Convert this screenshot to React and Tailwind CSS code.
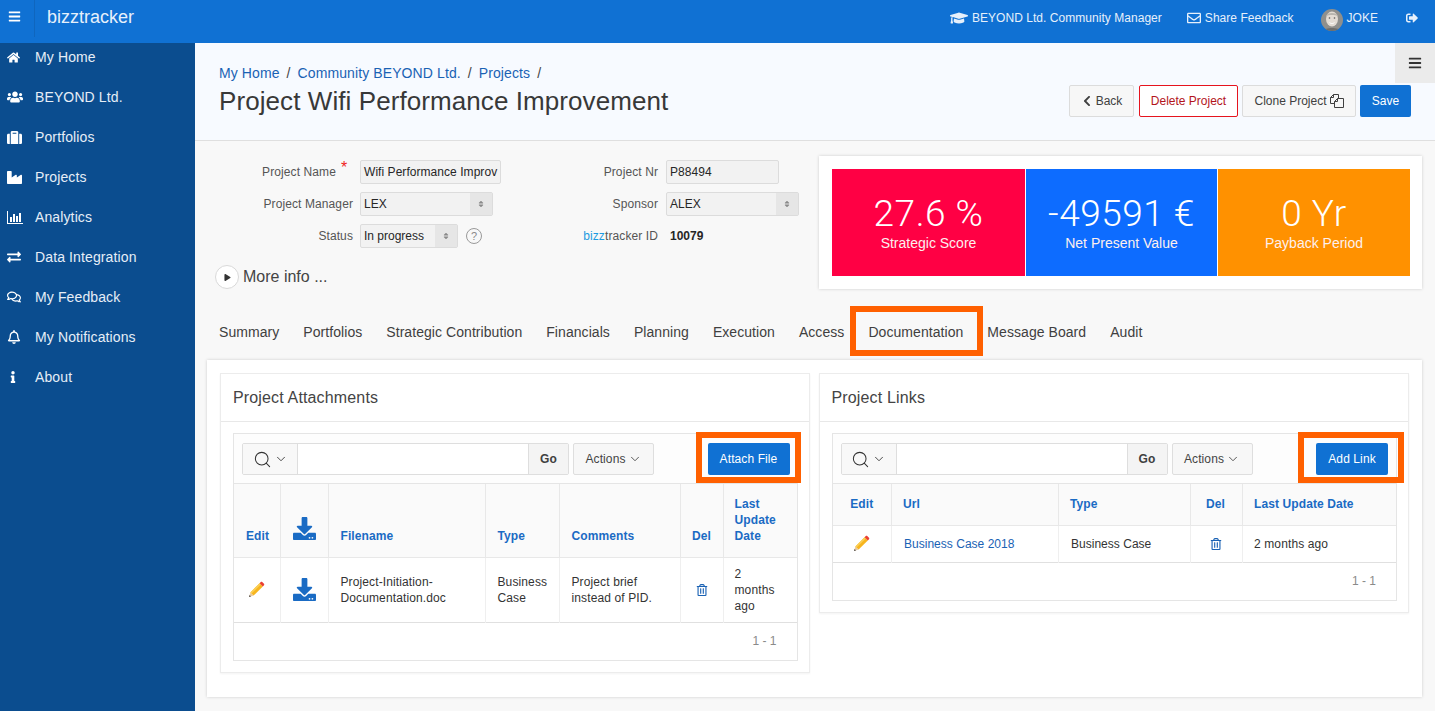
import React from "react";
import {
  FaBars,
  FaHome,
  FaUsers,
  FaSuitcase,
  FaIndustry,
  FaExchangeAlt,
  FaRegComments,
  FaRegBell,
  FaInfo,
  FaGraduationCap,
  FaRegEnvelope,
  FaSignOutAlt,
  FaChevronLeft,
  FaDownload,
  FaRegTrashAlt,
  FaPlay,
  FaSort,
} from "react-icons/fa";
import { Search, ChevronDown } from "lucide-react";

const font = { fontFamily: '"Liberation Sans", Arial, sans-serif' };

function ChartIcon() {
  return (
    <svg width="16" height="13" viewBox="0 0 16 13" fill="currentColor">
      <path d="M0 0h1v12h15v1H0z" />
      <rect x="3" y="6" width="2" height="5" />
      <rect x="6" y="3" width="2" height="8" />
      <rect x="9" y="5" width="2" height="6" />
      <rect x="12" y="2" width="2" height="9" />
    </svg>
  );
}

function CloneIcon() {
  return (
    <svg width="14" height="14" viewBox="0 0 14 14" fill="none" stroke="currentColor" strokeWidth="1">
      <path d="M8.500 4.500V.5H3.500L.5 3.500v6h4" />
      <path d="M.5 3.500h3v-3" />
      <path d="M4.500 13.500v-6l3-3h6v9z" fill="#f7f7f7" />
      <path d="M4.500 7.500h3v-3" />
    </svg>
  );
}

function Pencil() {
  return (
    <svg width="17" height="17" viewBox="0 0 17 17">
      <path d="M1 16l1.400-4.600 3.200 3.200z" fill="#e8c9a0" />
      <path d="M1 16l.6-2 1.400 1.400z" fill="#444" />
      <path d="M2.400 11.400L11.600 2.200l3.200 3.200-9.200 9.200z" fill="#f7b51e" />
      <path d="M2.400 11.400L11.600 2.200l1.200 1.200-9.200 9.200z" fill="#fbcf55" />
      <path d="M11.600 2.200l1.200-1.200c.4-.4 1-.4 1.400 0l1.800 1.800c.4.4.4 1 0 1.400l-1.200 1.200z" fill="#ea3f33" />
    </svg>
  );
}

function Avatar() {
  return (
    <svg width="22" height="22" viewBox="0 0 22 22" className="rounded-full">
      <rect width="22" height="22" fill="#8f8f8c" />
      <ellipse cx="11" cy="10" rx="6" ry="7.500" fill="#e3dcd4" />
      <path d="M5 7c1-4 11-4 12 0-3-1.500-9-1.500-12 0z" fill="#b9b5ae" />
      <path d="M8 13c2 1.500 4 1.500 6 0-1 2.500-5 2.500-6 0z" fill="#fff" />
      <circle cx="8.500" cy="9" r=".8" fill="#555" />
      <circle cx="13.500" cy="9" r=".8" fill="#555" />
      <path d="M2 22c2-4 16-4 18 0z" fill="#6e6e6c" />
    </svg>
  );
}

const navItems = [
  ["My Home", <FaHome size={13} />],
  ["BEYOND Ltd.", <FaUsers size={16} />],
  ["Portfolios", <FaSuitcase size={15} />],
  ["Projects", <FaIndustry size={15} />],
  ["Analytics", <ChartIcon />],
  ["Data Integration", <FaExchangeAlt size={14} />],
  ["My Feedback", <FaRegComments size={14} />],
  ["My Notifications", <FaRegBell size={14} />],
  ["About", <FaInfo size={12} />],
];

const tabs = [
  "Summary",
  "Portfolios",
  "Strategic Contribution",
  "Financials",
  "Planning",
  "Execution",
  "Access",
  "Documentation",
  "Message Board",
  "Audit",
];

function Header() {
  return (
    <div className="h-[43px] shrink-0 bg-[#1071d3] text-white flex items-center">
      <div className="w-[35px] h-[37px] mb-[6px] pb-1 flex items-center justify-center border-r border-[#0f66be] pr-[5px]">
        <FaBars size={13} />
      </div>
      <div className="ml-3 text-[18px] mb-[9px] text-[#e6f0fb]">bizztracker</div>
      <div className="ml-auto flex items-center text-[12px] tracking-[0.04px] mb-[8px] text-[#e6f0fb]">
        <FaGraduationCap size={18} className="mr-1" />
        <span>BEYOND Ltd. Community Manager</span>
        <FaRegEnvelope size={14} className="ml-[25px] mr-1" />
        <span>Share Feedback</span>
        <span className="ml-[28px] mr-[3px] mt-[5px]">
          <Avatar />
        </span>
        <span>JOKE</span>
        <FaSignOutAlt size={12} className="ml-[28px] mr-[17px]" />
      </div>
    </div>
  );
}

function Sidebar() {
  return (
    <div className="w-[195px] shrink-0 bg-[#0b4d8f] flex flex-col gap-3 text-[14px] tracking-[0.12px] text-[#e6eef7]">
      {navItems.map(([label, icon]) => (
        <div key={label} className="h-7 flex items-center">
          <span className="w-[35px] pl-[7px] flex items-center text-white">{icon}</span>
          <span>{label}</span>
        </div>
      ))}
    </div>
  );
}

function TitleBar() {
  return (
    <div className="relative h-[98px] bg-[#f7faff] border-b border-[#dfdfdf] pl-6 pr-6 flex">
      <div className="pt-[21px]">
        <div className="text-[14px] leading-[18px] tracking-[0.1px] text-[#1a62b4] flex">
          <span>My Home</span>
          <span className="mx-[7px] text-[#444]">/</span>
          <span>Community BEYOND Ltd.</span>
          <span className="mx-[7px] text-[#444]">/</span>
          <span>Projects</span>
          <span className="mx-[7px] text-[#444]">/</span>
        </div>
        <div className="mt-[2px] text-[26px] leading-[34px] tracking-[0.08px] text-[#383838]">
          Project Wifi Performance Improvement
        </div>
      </div>
      <div className="ml-auto mt-[42px] h-8 flex gap-[4px] text-[12px]">
        <button className="w-[65px] h-8 rounded-[2px] border border-[#dcdcdc] bg-[#f7f7f7] text-[#404040] flex items-center justify-center gap-[3px]">
          <FaChevronLeft size={12} />
          Back
        </button>
        <button className="w-[99px] h-8 rounded-[2px] border border-[#e6141e] bg-white text-[#b3141c] ml-px">
          Delete Project
        </button>
        <button className="w-[114px] h-8 rounded-[2px] border border-[#dcdcdc] bg-[#f7f7f7] text-[#404040] flex items-center justify-center gap-[3px]">
          Clone Project
          <CloneIcon />
        </button>
        <button className="w-[51px] h-8 rounded-[2px] bg-[#1071d3] text-white">Save</button>
      </div>
      <div className="absolute right-0 top-0 w-10 h-10 bg-[#ebebeb] flex items-center justify-center text-[#333]">
        <FaBars size={14} />
      </div>
    </div>
  );
}

function TextBox({ value, width }) {
  return (
    <div
      className={`${width} h-6 rounded-[2px] border border-[#dcdcdc] bg-[#f2f2f2] px-[3px] flex items-center text-[12px] tracking-[0.05px] text-[#262626] overflow-hidden whitespace-nowrap`}
    >
      {value}
    </div>
  );
}

function SelectBox({ value, width }) {
  return (
    <div
      className={`${width} h-6 rounded-[2px] border border-[#dcdcdc] bg-[#f2f2f2] pl-[3px] flex items-center text-[12px] text-[#262626]`}
    >
      <span>{value}</span>
      <span className="ml-auto w-[22px] h-full bg-[#e6e6e6] flex items-center justify-center text-[#8a8a8a]">
        <FaSort size={8} />
      </span>
    </div>
  );
}

function ProjectForm() {
  const label = "text-[12px] tracking-[0.1px] text-[#555] text-right";
  return (
    <div className="w-[624px] shrink-0 pt-1 pl-6">
      <div className="flex flex-col gap-2">
        <div className="flex items-center h-6">
          <div className="w-[341px] flex items-center gap-[7px]">
            <div className={`w-[134px] flex justify-end ${label}`}>
              <span>Project Name</span>
              <span className="w-[17px] pl-[5px] text-left text-[16px] leading-[9px] text-[#f01e1e]">*</span>
            </div>
            <TextBox value="Wifi Performance Improv" width="w-[141px]" />
          </div>
          <div className={`w-[98px] ${label}`}>Project Nr</div>
          <div className="ml-2">
            <TextBox value="P88494" width="w-[113px]" />
          </div>
        </div>
        <div className="flex items-center h-6">
          <div className="w-[341px] flex items-center gap-[7px]">
            <div className={`w-[134px] ${label}`}>Project Manager</div>
            <SelectBox value="LEX" width="w-[133px]" />
          </div>
          <div className={`w-[98px] ${label}`}>Sponsor</div>
          <div className="ml-2">
            <SelectBox value="ALEX" width="w-[133px]" />
          </div>
        </div>
        <div className="flex items-center h-6">
          <div className="w-[341px] flex items-center gap-[7px]">
            <div className={`w-[134px] ${label}`}>Status</div>
            <SelectBox value="In progress" width="w-[98px]" />
            <span className="ml-[1px] w-4 h-4 rounded-full border border-[#9a9a9a] text-[#8a8a8a] text-[11px] flex items-center justify-center">
              ?
            </span>
          </div>
          <div className={`w-[98px] ${label}`}>
            <span className="text-[#1d9be0]">bizz</span>tracker ID
          </div>
          <div className="ml-2 pl-1 text-[12px] font-bold text-[#262626]">10079</div>
        </div>
      </div>
      <div className="mt-[17px] -ml-1 flex items-center gap-1">
        <span className="w-6 h-6 rounded-full border border-[#d9d9d9] bg-white flex items-center justify-center text-[#333]">
          <FaPlay size={7} />
        </span>
        <span className="text-[16px] text-[#444]">More info ...</span>
      </div>
    </div>
  );
}

function Metrics() {
  const tiles = [
    ["27.6 %", "Strategic Score", "bg-[#ff0044]", "w-[193px]"],
    ["-49591 €", "Net Present Value", "bg-[#0d6cff]", "w-[191px]"],
    ["0 Yr", "Payback Period", "bg-[#ff9100]", "w-[192px]"],
  ];
  return (
    <div className="w-[603px] h-[133px] bg-white shadow-[0_0_3px_rgba(0,0,0,0.18)] py-[13px] pl-[13px] pr-3 flex gap-px">
      {tiles.map(([value, name, bg, w]) => (
        <div key={name} className={`${w} ${bg} text-white flex flex-col items-center pt-[27px]`}>
          <div
            className="text-[37px] leading-[36px] tracking-[0.5px] font-light"
            style={{ fontFamily: '"Roboto", sans-serif' }}
          >
            {value}
          </div>
          <div className="mt-[2px] text-[14px] leading-[18px] text-[#fdf0ee]">{name}</div>
        </div>
      ))}
    </div>
  );
}

function Tabs() {
  return (
    <div className="mt-[15px] h-14 pl-6 flex items-center gap-6 text-[14px] tracking-[0.06px] text-[#404040]">
      {tabs.map((t) => (
        <div key={t} className="relative">
          {t}
          {t === "Documentation" && (
            <span className="absolute -left-[18px] -right-[20px] -top-[16px] -bottom-[13px] border-[6px] border-[#ff6000] pointer-events-none" />
          )}
        </div>
      ))}
    </div>
  );
}

function Toolbar({ children }) {
  return (
    <div className="h-[50px] pl-2 pt-px flex items-center text-[12px] tracking-[0.1px] bg-[#fdfdfd] border-b border-[#e5e5e5]">
      <div className="h-8 flex rounded-[2px] border border-[#dedede] overflow-hidden">
        <div className="w-[55px] bg-[#f8f8f8] border-r border-[#dedede] flex items-center justify-center gap-[2px] text-[#333]">
          <Search size={19} strokeWidth={1.3} />
          <ChevronDown size={14} strokeWidth={1.5} />
        </div>
        <div className="w-[230px] bg-white" />
        <div className="w-[40px] bg-[#f4f4f4] border-l border-[#dedede] flex items-center justify-center font-bold text-[#404040]">
          Go
        </div>
      </div>
      <div className="ml-1 w-[81px] h-8 rounded-[2px] border border-[#dedede] bg-[#f7f7f7] flex items-center justify-center gap-[2px] text-[#444]">
        Actions
        <ChevronDown size={14} strokeWidth={1.5} />
      </div>
      {children}
    </div>
  );
}

function Highlighted({ label, width, margin, box }) {
  return (
    <button className={`relative ${width} ${margin} ml-auto h-8 rounded-[2px] bg-[#1071d3] text-white`}>
      {label}
      <span className={`absolute ${box} -top-[11px] -bottom-2 border-[6px] border-[#ff6000] pointer-events-none`} />
    </button>
  );
}

const th = "px-3 py-[8px] align-bottom text-left text-[12px] leading-4 tracking-[0.1px] font-bold text-[#1a6bc4] border-r border-[#e8e8e8] last:border-r-0";
const td = "px-3 py-[8px] text-[12px] leading-4 tracking-[0.12px] border-r border-[#efefef] last:border-r-0";

function AttachmentsTable() {
  return (
    <table className="w-full table-fixed border-collapse">
      <thead>
        <tr className="h-[73px] bg-[#fafafa] border-b border-[#e8e8e8]">
          <th className={`${th} w-[46px] !pb-[13px]`}>Edit</th>
          <th className={`${th} w-[48px] text-center !pb-[13px]`}>
            <FaDownload size={23} className="text-[#1a6bc4] mx-auto mb-[4px]" />
          </th>
          <th className={`${th} w-[157px] !pb-[13px]`}>Filename</th>
          <th className={`${th} w-[74px] !pb-[13px]`}>Type</th>
          <th className={`${th} w-[121px] !pb-[13px]`}>Comments</th>
          <th className={`${th} w-[43px] !text-center !px-0 !pb-[13px]`}>Del</th>
          <th className={`${th} !pl-[11px] !pb-[13px]`}>
            Last
            <br />
            Update
            <br />
            Date
          </th>
        </tr>
      </thead>
      <tbody className="text-[#333]">
        <tr className="h-[65px] border-b border-[#e0e0e0]">
          <td className={td}>
            <span className="flex justify-center">
              <Pencil />
            </span>
          </td>
          <td className={td}>
            <FaDownload size={23} className="text-[#1a6bc4] mx-auto" />
          </td>
          <td className={td}>
            Project-Initiation-
            <br />
            Documentation.doc
          </td>
          <td className={td}>
            Business
            <br />
            Case
          </td>
          <td className={td}>Project brief instead of PID.</td>
          <td className={`${td} !px-0`}>
            <FaRegTrashAlt size={12} className="text-[#1a62b4] mx-auto" />
          </td>
          <td className={`${td} !pl-[11px]`}>2 months ago</td>
        </tr>
      </tbody>
    </table>
  );
}

function LinksTable() {
  return (
    <table className="w-full table-fixed border-collapse">
      <thead>
        <tr className="h-[41px] bg-[#fafafa] border-b border-[#e8e8e8]">
          <th className={`${th} w-[59px] !align-middle !text-center`}>Edit</th>
          <th className={`${th} w-[167px] !align-middle !pl-[11px]`}>Url</th>
          <th className={`${th} w-[132px] !align-middle !pl-[11px]`}>Type</th>
          <th className={`${th} w-[52px] !align-middle !text-center !px-0 !pr-[2px]`}>Del</th>
          <th className={`${th} !align-middle !pl-[11px]`}>Last Update Date</th>
        </tr>
      </thead>
      <tbody className="text-[#333]">
        <tr className="h-[37px] border-b border-[#e0e0e0]">
          <td className={td}>
            <span className="flex justify-center">
              <Pencil />
            </span>
          </td>
          <td className={`${td} text-[#1a62b4] !tracking-[0.02px]`}>Business Case 2018</td>
          <td className={`${td} !tracking-[0.02px]`}>Business Case</td>
          <td className={`${td} !px-0 !pr-[2px]`}>
            <FaRegTrashAlt size={12} className="text-[#1a62b4] mx-auto" />
          </td>
          <td className={`${td} !pl-[11px]`}>2 months ago</td>
        </tr>
      </tbody>
    </table>
  );
}

function Card({ title, width, children }) {
  return (
    <div className={`${width} bg-white border border-[#ececec] shadow-[0_1px_2px_rgba(0,0,0,0.05)]`}>
      <div className="h-12 border-b border-[#e8e8e8] pl-3 flex items-center text-[16px] tracking-[0.15px] text-[#444]">
        {title}
      </div>
      <div className="pl-3 pr-[11px] pb-[11px] pt-[11px]">
        <div className="border border-[#e5e5e5]">{children}</div>
      </div>
    </div>
  );
}

function Pager() {
  return <div className="h-[37px] pr-5 flex items-center justify-end text-[12px] text-[#8a8a8a]">1 - 1</div>;
}

export default function App() {
  return (
    <div className="h-[711px] overflow-hidden flex flex-col bg-[#f8f8f8]" style={font}>
      <Header />
      <div className="flex flex-1 min-h-0">
        <Sidebar />
        <div className="flex-1 min-w-0">
          <TitleBar />
          <div className="pt-[15px] flex">
            <ProjectForm />
            <Metrics />
          </div>
          <Tabs />
          <div className="ml-3 w-[1215px] h-[337px] bg-white shadow-[0_0_3px_rgba(0,0,0,0.18)] p-[13px] flex items-start gap-[9px]">
            <Card title="Project Attachments" width="w-[590px]">
              <Toolbar>
                <Highlighted label="Attach File" width="w-[82px]" margin="mr-[7px]" box="-left-3 -right-[11px]" />
              </Toolbar>
              <AttachmentsTable />
              <Pager />
            </Card>
            <Card title="Project Links" width="w-[591px]">
              <Toolbar>
                <Highlighted label="Add Link" width="w-[72px]" margin="mr-2" box="-left-[18px] -right-4" />
              </Toolbar>
              <LinksTable />
              <Pager />
            </Card>
          </div>
        </div>
      </div>
    </div>
  );
}
